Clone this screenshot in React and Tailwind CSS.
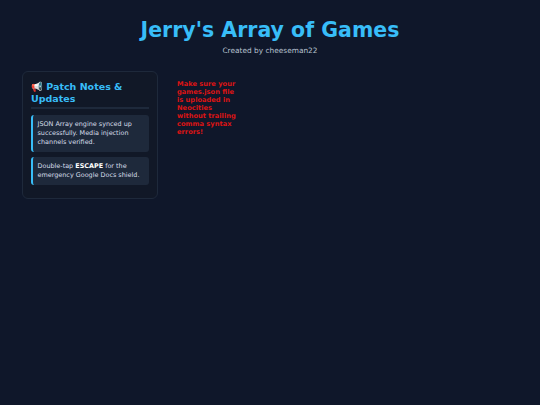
export default function App() {
  return (
    <div className="min-h-[405px] bg-[#0f172a] font-['DejaVu_Sans',sans-serif]">
      <header className="pt-[18px] text-center">
        <h1 className="text-[20.5px] leading-[24px] font-bold text-[#38bdf8]">Jerry's Array of Games</h1>
        <p className="mt-[4px] text-[7.4px] leading-[9px] text-[#b8c2d0]">Created by cheeseman22</p>
      </header>
      <main className="flex items-start gap-[19px] pt-[16px] pl-[22px]">
        <aside className="w-[136px] rounded-[6px] border border-[#1e293b] bg-[#111827] px-[8px] pt-[9px] pb-[13px]">
          <h2 className="border-b-2 border-[#1e293b] pb-[2px] text-[9.5px] leading-[12px] font-bold text-[#38bdf8]">📢 Patch Notes & Updates</h2>
          <div className="mt-[6px] rounded-[3px] border-l-2 border-[#38bdf8] bg-[#1e293b] py-[5px] pr-[5px] pl-[4.5px] text-[6.45px] leading-[9px] text-[#d5dde8]">
            JSON Array engine synced up successfully. Media injection channels verified.
          </div>
          <div className="mt-[5px] rounded-[3px] border-l-2 border-[#38bdf8] bg-[#1e293b] py-[5px] pr-[5px] pl-[4.5px] text-[6.45px] leading-[9px] text-[#d5dde8]">
            Double-tap <strong className="text-white">ESCAPE</strong> for the emergency Google Docs shield.
          </div>
        </aside>
        <p className="mt-[9px] w-[60px] text-[6.7px] leading-[8px] font-bold text-[#dc1414]">
          Make sure your games.json file is uploaded in Neocities without trailing comma syntax errors!
        </p>
      </main>
    </div>
  );
}
